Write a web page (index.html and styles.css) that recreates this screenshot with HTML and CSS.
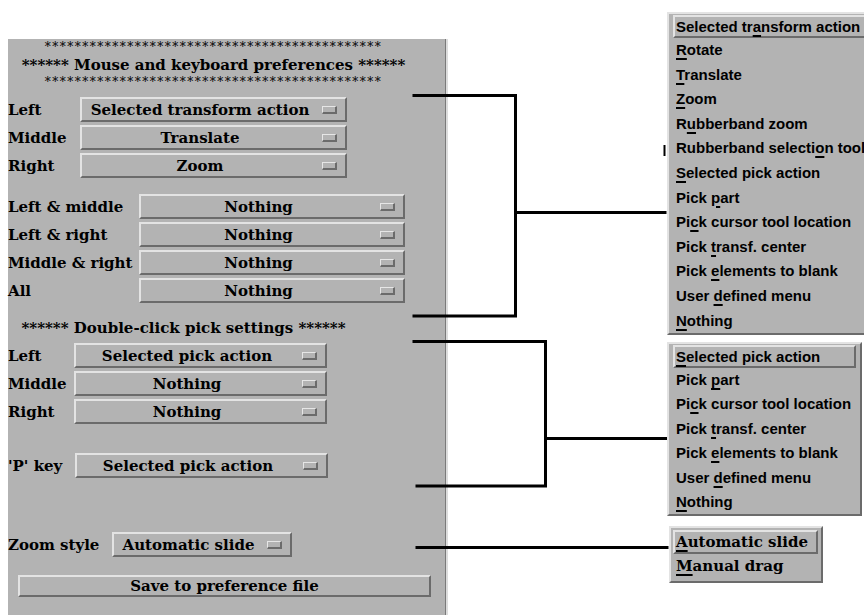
FILE: index.html
```html
<!DOCTYPE html>
<html>
<head>
<meta charset="utf-8">
<title>Mouse and keyboard preferences</title>
<link rel="stylesheet" href="styles.css">
</head>
<body>
<div class="stage">
  <div class="panel">
    <div class="title">
      <div class="stars stars-top">*********************************************</div>
      <div class="head">****** Mouse and keyboard preferences ******</div>
      <div class="stars stars-bot">*********************************************</div>
    </div>

    <div class="group g1">
      <div class="row"><span class="lbl">Left</span><div class="opt"><span class="val">Selected transform action</span><i class="ind"></i></div></div>
      <div class="row"><span class="lbl">Middle</span><div class="opt"><span class="val">Translate</span><i class="ind"></i></div></div>
      <div class="row"><span class="lbl">Right</span><div class="opt"><span class="val">Zoom</span><i class="ind"></i></div></div>
    </div>

    <div class="group g2">
      <div class="row"><span class="lbl">Left &amp; middle</span><div class="opt"><span class="val">Nothing</span><i class="ind"></i></div></div>
      <div class="row"><span class="lbl">Left &amp; right</span><div class="opt"><span class="val">Nothing</span><i class="ind"></i></div></div>
      <div class="row"><span class="lbl">Middle &amp; right</span><div class="opt"><span class="val">Nothing</span><i class="ind"></i></div></div>
      <div class="row"><span class="lbl">All</span><div class="opt"><span class="val">Nothing</span><i class="ind"></i></div></div>
    </div>

    <div class="subhead">****** Double-click pick settings ******</div>

    <div class="group g3">
      <div class="row"><span class="lbl">Left</span><div class="opt"><span class="val">Selected pick action</span><i class="ind"></i></div></div>
      <div class="row"><span class="lbl">Middle</span><div class="opt"><span class="val">Nothing</span><i class="ind"></i></div></div>
      <div class="row"><span class="lbl">Right</span><div class="opt"><span class="val">Nothing</span><i class="ind"></i></div></div>
    </div>

    <div class="group g4">
      <div class="row"><span class="lbl">'P' key</span><div class="opt"><span class="val">Selected pick action</span><i class="ind"></i></div></div>
    </div>

    <div class="group g5">
      <div class="row"><span class="lbl">Zoom style</span><div class="opt"><span class="val">Automatic slide</span><i class="ind"></i></div></div>
    </div>

    <div class="save">Save to preference file</div>
  </div>

  <svg class="connectors" width="864" height="615" viewBox="0 0 864 615">
    <g stroke="#000" stroke-width="3" fill="none" stroke-linecap="square">
      <polyline points="414,95.5 515.5,95.5 515.5,316 414,316"/>
      <line x1="515.5" y1="212.5" x2="665" y2="212.5"/>
      <polyline points="414,341.5 545.5,341.5 545.5,486 417,486"/>
      <line x1="545.5" y1="438.5" x2="666" y2="438.5"/>
      <line x1="417" y1="547.5" x2="667" y2="547.5"/>
    </g>
    <line x1="664.5" y1="145" x2="664.5" y2="156" stroke="#000" stroke-width="2"/>
  </svg>

  <div class="menu menu-transform">
    <div class="mhead">Selected tr<u>a</u>nsform action</div>
    <div class="mitem"><u>R</u>otate</div>
    <div class="mitem"><u>T</u>ranslate</div>
    <div class="mitem"><u>Z</u>oom</div>
    <div class="mitem">R<u>u</u>bberband zoom</div>
    <div class="mitem">Rubberband selecti<u>o</u>n tool</div>
    <div class="mitem"><u>S</u>elected pick action</div>
    <div class="mitem">Pick <u>p</u>art</div>
    <div class="mitem">Pi<u>c</u>k cursor tool location</div>
    <div class="mitem">Pick <u>t</u>ransf. center</div>
    <div class="mitem">Pick <u>e</u>lements to blank</div>
    <div class="mitem">User <u>d</u>efined menu</div>
    <div class="mitem"><u>N</u>othing</div>
  </div>

  <div class="menu menu-pick">
    <div class="mhead"><u>S</u>elected pick action</div>
    <div class="mitem">Pick <u>p</u>art</div>
    <div class="mitem">Pi<u>c</u>k cursor tool location</div>
    <div class="mitem">Pick <u>t</u>ransf. center</div>
    <div class="mitem">Pick <u>e</u>lements to blank</div>
    <div class="mitem">User <u>d</u>efined menu</div>
    <div class="mitem"><u>N</u>othing</div>
  </div>

  <div class="menu menu-zoom">
    <div class="mhead"><u>A</u>utomatic slide</div>
    <div class="mitem"><u>M</u>anual drag</div>
  </div>
</div>
</body>
</html>
```

FILE: styles.css
```css
html, body {
  margin: 0;
  padding: 0;
  background: #ffffff;
  overflow: hidden;
}

.stage {
  position: relative;
  width: 864px;
  height: 615px;
  overflow: hidden;
}

.panel {
  margin: 39px 0 0 8px;
  width: 437px;
  height: 600px;
  background: #b3b3b3;
  border-right: 1px solid #7a7a7a;
  box-shadow: 2px 0 0 #dcdcdc;
  display: flex;
  flex-direction: column;
  font-family: "DejaVu Serif", serif;
  font-weight: bold;
  font-size: 15px;
  color: #000;
}

.title {
  width: 411px;
  text-align: center;
}

.stars {
  font-weight: normal;
  font-size: 12px;
  letter-spacing: 1.5px;
}

.stars-top { line-height: 16px; height: 16px; }
.head { line-height: 20px; height: 20px; }
.stars-bot { line-height: 15px; height: 15px; }

.head, .subhead {
  white-space: nowrap;
}

.subhead {
  width: 351px;
  text-align: center;
  line-height: 20px;
  height: 20px;
  margin-top: 15px;
}

.group {
  display: flex;
  flex-direction: column;
  gap: 3px;
}

.row {
  display: flex;
  align-items: center;
  height: 25px;
}

.lbl {
  white-space: nowrap;
}

.opt {
  box-sizing: border-box;
  height: 25px;
  display: flex;
  align-items: center;
  border-style: solid;
  border-width: 2px;
  border-color: #e3e3e3 #6b6b6b #6b6b6b #e3e3e3;
  background: #b3b3b3;
}

.val {
  flex: 1;
  text-align: center;
  white-space: nowrap;
  line-height: 20px;
}

.ind {
  box-sizing: border-box;
  width: 15px;
  height: 8px;
  margin: 0 8px 0 4px;
  border-style: solid;
  border-width: 1px 2px 2px 1px;
  border-color: #e6e6e6 #6b6b6b #6b6b6b #e6e6e6;
  background: #b3b3b3;
}

.g1 { margin-top: 7px; }
.g1 .lbl { width: 72px; }
.g1 .opt { width: 267px; }

.g2 { margin-top: 16px; }
.g2 .lbl { width: 131px; }
.g2 .opt { width: 266px; }

.g3 { margin-top: 5px; }
.g3 .lbl { width: 66px; }
.g3 .opt { width: 253px; }

.g4 { margin-top: 29px; }
.g4 .lbl { width: 67px; }
.g4 .opt { width: 253px; }

.g5 { margin-top: 54px; }
.g5 .lbl { width: 104px; }
.g5 .opt { width: 180px; }

.save {
  box-sizing: border-box;
  margin: 18px 0 0 10px;
  width: 413px;
  height: 22px;
  line-height: 18px;
  text-align: center;
  border-style: solid;
  border-width: 2px;
  border-color: #e3e3e3 #6b6b6b #6b6b6b #e3e3e3;
}

.connectors {
  position: absolute;
  left: 0;
  top: 0;
  pointer-events: none;
}

.menu {
  position: absolute;
  box-sizing: border-box;
  background: #b3b3b3;
  border-style: solid;
  border-width: 2px;
  border-color: #e3e3e3 #6b6b6b #6b6b6b #e3e3e3;
  padding: 1px 4px 0 4px;
  font-family: "Liberation Sans", Arial, sans-serif;
  font-weight: bold;
  font-size: 15px;
  color: #000;
  white-space: nowrap;
}

.menu u {
  text-underline-offset: 3px;
  text-decoration-thickness: 2px;
}

.mhead {
  box-sizing: border-box;
  height: 23px;
  line-height: 19px;
  padding-left: 1px;
  border-style: solid;
  border-width: 2px;
  border-color: #e3e3e3 #6b6b6b #6b6b6b #e3e3e3;
}

.mitem {
  padding-left: 3px;
}

.menu-transform {
  left: 667px;
  top: 12px;
  width: 220px;
}
.menu-transform .mitem {
  height: 24.6px;
  line-height: 24.6px;
}

.menu-pick {
  left: 667px;
  top: 342px;
  width: 195px;
}
.menu-pick .mitem {
  height: 24.4px;
  line-height: 24.4px;
}

.menu-zoom {
  left: 669px;
  top: 526px;
  width: 154px;
  padding: 2px 3px 2px 2px;
  font-family: "DejaVu Serif", serif;
  font-size: 15px;
}
.menu-zoom .mhead {
  height: 24px;
  line-height: 20px;
}
.menu-zoom .mitem {
  height: 25px;
  line-height: 25px;
}
```
